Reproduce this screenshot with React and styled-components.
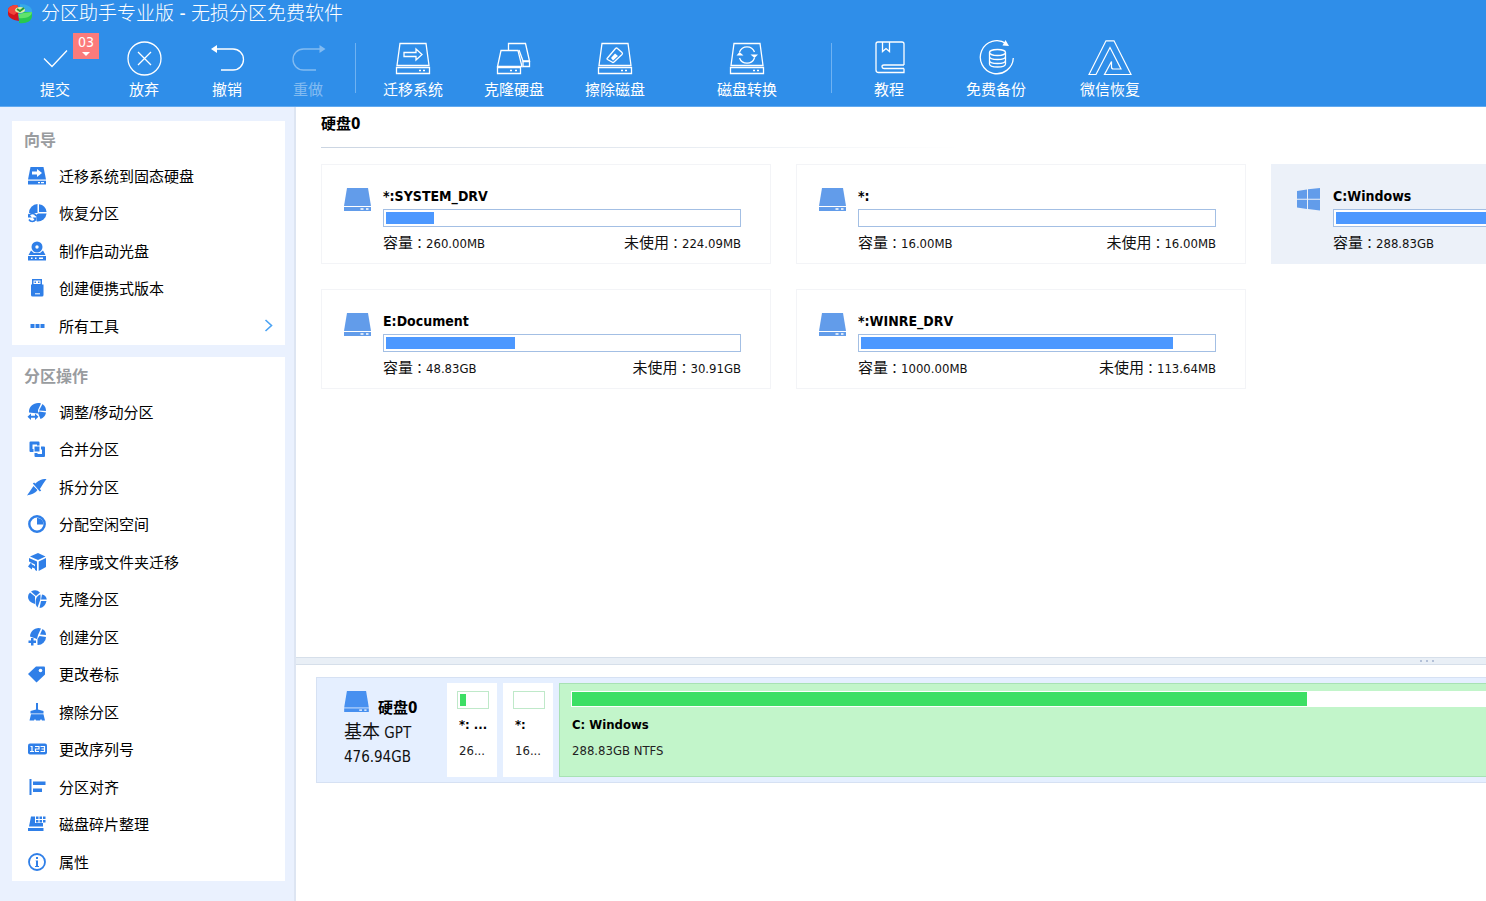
import React from "react";
import styled, { createGlobalStyle } from "styled-components";

const GlobalStyle = createGlobalStyle`
  * {
    box-sizing: border-box;
  }

  body {
    margin: 0;
    background: #fff;
    color: #111;
    font-family: "DejaVu Sans Condensed", "Noto Sans CJK SC", sans-serif;
    font-size: 15px;
  }

  button {
    margin: 0;
    padding: 0;
    border: 0;
    background: none;
    color: inherit;
    font: inherit;
    cursor: pointer;
  }

  svg {
    display: block;
    flex: none;
  }
`;

const Page = styled.div`
  display: flex;
  flex-direction: column;
  min-height: 100vh;
  overflow: hidden;
`;

const Header = styled.header`
  background: #2f8ee9;
  border-bottom: 1px solid #62aaf0;
  color: #fff;
`;

const TitleBar = styled.div`
  display: flex;
  align-items: center;
  gap: 8px;
  height: 26px;
  padding-left: 7px;
`;

const Title = styled.h1`
  margin: 0;
  font-size: 19px;
  font-weight: 300;
  line-height: 24px;
  white-space: nowrap;
`;

const Toolbar = styled.nav`
  display: flex;
  align-items: flex-start;
  height: 80px;
  padding: 14px 0 0 12px;
`;

const ToolButton = styled.button`
  position: relative;
  display: flex;
  flex: none;
  flex-direction: column;
  align-items: center;
  gap: 4px;
  width: ${(props) => props.$width}px;
  line-height: 20px;
  opacity: ${(props) => (props.disabled ? 0.4 : 1)};
`;

const Separator = styled.span`
  flex: none;
  width: 1px;
  height: 50px;
  margin: 3px ${(props) => props.$gap}px 0;
  background: #6fb2f2;
`;

const Badge = styled.span`
  position: absolute;
  top: -7px;
  right: -1px;
  display: flex;
  flex-direction: column;
  align-items: center;
  width: 26px;
  height: 26px;
  background: #fb7b7b;
  font-size: 14px;
  line-height: 19px;
`;

const Body = styled.div`
  display: flex;
  flex: 1;
`;

const Sidebar = styled.aside`
  display: flex;
  flex: none;
  flex-direction: column;
  gap: 12px;
  width: 296px;
  padding: 14px 9px 20px 12px;
  border-right: 2px solid #dde5f2;
  background: #eaf1fe;
`;

const Panel = styled.section`
  padding-bottom: 1px;
  background: #fff;
`;

const PanelTitle = styled.h2`
  margin: 0;
  padding: 3px 0 0 12px;
  color: #999c9f;
  font-size: 16px;
  line-height: 33px;
`;

const MenuList = styled.ul`
  display: grid;
  grid-auto-rows: 37px 38px;
  margin: 0;
  padding: 0;
  list-style: none;
`;

const MenuButton = styled.button`
  display: flex;
  align-items: center;
  gap: 12px;
  width: 100%;
  height: 100%;
  padding: 0 12px 0 15px;
  color: #000;
  text-align: left;

  > svg:first-child {
    color: #2f7fe8;
  }
`;

const MenuLabel = styled.span`
  flex: 1;
  padding-bottom: 1px;
`;

const Main = styled.main`
  display: flex;
  flex: 1;
  flex-direction: column;
  min-width: 0;
`;

const DiskView = styled.section`
  flex: 1;
  padding: 7px 0 0 25px;
  overflow: hidden;
`;

const DiskTitle = styled.h2`
  margin: 0;
  color: #000;
  font-size: 15px;
  line-height: 20px;
`;

const Divider = styled.hr`
  width: 640px;
  height: 1px;
  margin: 13px 0 16px;
  border: 0;
  background: linear-gradient(to right, #cbd5e2, #fff);
`;

const CardGrid = styled.div`
  display: grid;
  grid-template-columns: repeat(3, 450px);
  gap: 25px;
`;

const Card = styled.article`
  display: flex;
  gap: 12px;
  padding: 21px 29px 9px 22px;
  border: 1px solid ${(props) => (props.$selected ? "#ecf1f9" : "#f3f4f7")};
  background: ${(props) => (props.$selected ? "#ecf1f9" : "#fff")};

  > svg {
    margin-top: 2px;
    color: #629cea;
  }
`;

const CardBody = styled.div`
  flex: 1;
`;

const CardName = styled.h3`
  margin: 0 0 3px;
  color: #000;
  font-size: 14px;
  line-height: 20px;
`;

const UsageBar = styled.div`
  height: 18px;
  padding: 2px;
  border: 1px solid #a3bfe4;
  background: #fff;
`;

const UsageFill = styled.div`
  height: 100%;
  background: #4c98ff;
`;

const CardMeta = styled.div`
  display: flex;
  justify-content: space-between;
  margin-top: 6px;
  font-size: 13px;
  line-height: 20px;
`;

const MetaText = styled.span`
  display: flex;
  align-items: baseline;
`;

const MetaLabel = styled.span`
  font-size: 15px;
`;

const Colon = styled.span`
  font-family: "Noto Sans CJK TC", sans-serif;
`;

const Splitter = styled.div`
  display: flex;
  align-items: center;
  justify-content: flex-end;
  gap: 4px;
  height: 8px;
  padding-right: 52px;
  border: solid #d6dfea;
  border-width: 1px 0;
  background: #e9eff6;
`;

const Grip = styled.i`
  width: 2px;
  height: 2px;
  background: #b4c1d8;
`;

const MapView = styled.section`
  padding: 12px 0 118px 20px;
`;

const DiskMap = styled.div`
  display: flex;
  gap: 6px;
  padding: 5px 0;
  border: 1px solid #d6e1f3;
  border-right: 0;
  background: #e5efff;
`;

const DiskInfo = styled.div`
  flex: none;
  width: 124px;
  padding: 8px 0 0 27px;
  font-size: 15px;
  line-height: 24px;
`;

const DiskInfoHead = styled.div`
  display: flex;
  gap: 9px;
  color: #000;
  font-weight: bold;

  > svg {
    color: #4790f0;
  }

  > span {
    padding-top: 5px;
  }
`;

const DiskKind = styled.span`
  font-size: 18px;
`;

const Part = styled.div`
  flex: ${(props) => (props.$active ? "1" : "none")};
  width: 50px;
  min-width: 0;
  height: 94px;
  padding: ${(props) => (props.$active ? "7px 0 0 11px" : "7px 7px 0 9px")};
  border: 1px solid ${(props) => (props.$active ? "#a8e2b4" : "#fff")};
  border-right-width: ${(props) => (props.$active ? "0" : "1px")};
  background: ${(props) => (props.$active ? "#c2f5ca" : "#fff")};
  font-size: 13px;
  white-space: nowrap;
`;

const PartBar = styled.div`
  height: ${(props) => (props.$active ? "16px" : "18px")};
  padding: ${(props) => (props.$active ? "1px 0 1px 1px" : "2px")};
  border: ${(props) => (props.$active ? "0" : "1px solid #bfe9c9")};
  background: #fff;
`;

const PartFill = styled.div`
  height: 100%;
  background: #3cdf64;
`;

const PartName = styled.div`
  margin-top: ${(props) => (props.$active ? "8px" : "6px")};
  padding-left: ${(props) => (props.$active ? "1px" : "2px")};
  color: #000;
  font-weight: bold;
  line-height: 20px;
`;

const PartSize = styled.div`
  margin-top: 6px;
  padding-left: ${(props) => (props.$active ? "1px" : "2px")};
  color: #222;
  line-height: 20px;
`;

const Logo = () => (
  <svg width="26" height="22" viewBox="0 0 26 22">
    <path d="M13 8V2C20 2 25 5 25 9v3H17Z" fill="#35a9e8" />
    <path d="M17 10h8v4c0 5-6 8-13 7l1-8Z" fill="#27c94f" />
    <path d="M11 12l6-1 8-1c0 4-6 7-13 6Z" fill="#5fe36c" />
    <path d="M1 8c0-3 4-5 9-5l3 5-2 4 1 7C5 18 1 15 1 12Z" fill="#d3141d" />
    <path d="M1 8c0-3 4-5 9-5l3 5-6 5C3 12 1 10 1 8Z" fill="#f0463c" />
    <ellipse cx="13" cy="8" rx="5" ry="3" fill="#d9f2a7" />
    <path d="M10 7l3 2 4-3" fill="none" stroke="#299b32" strokeWidth="2" />
  </svg>
);

const LineIcon = ({ children }) => (
  <svg
    width="36"
    height="36"
    viewBox="0 0 36 36"
    fill="none"
    stroke="currentColor"
    strokeWidth="1.3"
    aria-hidden="true"
  >
    {children}
  </svg>
);

const driveOutline = (
  <>
    <path d="M5 3.5h26l3 22H2Z" />
    <path d="M1.5 27.5h33v6h-33Z" />
    <path d="M24 30.5h2M28 30.5h2" />
  </>
);

const toolIcons = {
  submit: (
    <LineIcon>
      <path d="M7 18.500l8 8 15-16" />
    </LineIcon>
  ),
  discard: (
    <LineIcon>
      <circle cx="18.500" cy="18.500" r="16.500" />
      <path d="M12 12l13 13M25 12L12 25" />
    </LineIcon>
  ),
  undo: (
    <LineIcon>
      <path d="M6 9h18a10.500 10.500 0 0 1 0 21H12" />
      <path d="M2 9l6-4v8Z" fill="currentColor" stroke="none" />
    </LineIcon>
  ),
  redo: (
    <LineIcon>
      <path d="M31 9H13.500a10.500 10.500 0 0 0 0 21H26" />
      <path d="M35.500 9l-6-4v8Z" fill="currentColor" stroke="none" />
    </LineIcon>
  ),
  migrate: (
    <LineIcon>
      {driveOutline}
      <path d="M9 12.500h12v-3.500l6 5.500-6 5.500v-3.500H9Z" />
    </LineIcon>
  ),
  clone: (
    <LineIcon>
      <path d="M5 10.500h17l4 16H1.500Z" />
      <path d="M1.500 27.500h23v6h-23Z" />
      <path d="M14 30.500h2M19 30.500h2" />
      <path d="M12.500 10V3.500h17l4 17.500h-6.500l-4-11" />
      <path d="M27 21.500h6.500v5H27Z" />
    </LineIcon>
  ),
  erase: (
    <LineIcon>
      {driveOutline}
      <path d="M10.500 18l8-9.500q1-1 2 0l4.500 4q1 1 0 2l-8 7.500q-1 1-2 0l-4.500-2.500q-1-.7 0-1.500Z" />
      <path d="M14 18l4-4.500 3 2.500-5 4.500Z" fill="currentColor" stroke="none" />
    </LineIcon>
  ),
  convert: (
    <LineIcon>
      {driveOutline}
      <path d="M10.500 12a8 8 0 0 1 15 0M25.500 18a8 8 0 0 1-15 0" />
      <path d="M7.500 15.500L10.500 12l4 3.500ZM21.500 14.500h7.500L25.500 18Z" fill="currentColor" stroke="none" />
    </LineIcon>
  ),
  tutorial: (
    <LineIcon>
      <path d="M33 25V4q0-2-2-2H7Q5 2 5 4v26q0 2.500 2.500 2.500H33v-4M33 25H13q-2 0-2 1.700t2 1.800h20" />
      <path d="M11.500 2v9.500l3.500-3 3.500 3V2" />
    </LineIcon>
  ),
  backup: (
    <LineIcon>
      <path d="M28 3.500A16.500 16.500 0 1 0 35.300 18" />
      <path d="M24.500 5.500L27.500 0 31 6Z" fill="currentColor" stroke="none" />
      <ellipse cx="19.500" cy="12.500" rx="8" ry="3" />
      <path d="M11.500 12.500V24c0 4 16 4 16 0V12.500M11.500 16.500c0 4 16 4 16 0M11.500 20.500c0 4 16 4 16 0" />
    </LineIcon>
  ),
  wechat: (
    <svg width="44" height="36" viewBox="0 0 44 36" fill="none" stroke="currentColor" strokeWidth="1.200">
      <path d="M1 34.500L18 .800h8L43 34.500H16.500l7-13V27q0 2 2 2h7.500L22 7.500 8 34.500Z" />
    </svg>
  ),
};

const MenuIcon = ({ children }) => (
  <svg width="20" height="20" viewBox="0 0 20 20" fill="currentColor" aria-hidden="true">
    {children}
  </svg>
);

const menuIcons = {
  migrate: (
    <MenuIcon>
      <path d="M3.500 1h13L19 13.500H1Z" />
      <path d="M1 14.700h18V18.500H1Z" />
      <path d="M5 5.500h5V3l5 4-5 4V8.500H5Z" fill="#fff" />
      <path d="M11 16h2v1.200h-2ZM14 16h3v1.200h-3Z" fill="#fff" />
    </MenuIcon>
  ),
  restore: (
    <MenuIcon>
      <path d="M10.500 1v9H2a9 9 0 0 1 8.500-9Z" />
      <path d="M12 1.200A9 9 0 0 1 19.600 9H12Z" />
      <path d="M19.600 10.500A9 9 0 0 1 10 18.500L9 12l2-1.500Z" />
      <path d="M2 13a3.700 3.700 0 0 1 7 0M8.500 16.500a3.700 3.700 0 0 1-6.500 0" fill="none" stroke="currentColor" strokeWidth="1.600" />
      <path d="M1 10.500v4h4ZM9.500 18.500v-4h-4Z" />
    </MenuIcon>
  ),
  disc: (
    <MenuIcon>
      <path d="M4 9.500L1.500 14h17l-2.500-4.500-3 2.500H7Z" />
      <circle cx="10" cy="6" r="5.500" />
      <circle cx="10" cy="6" r="1.700" fill="#fff" />
      <path d="M1 15h18v4.500H1Z" />
      <path d="M4 16.500h1.500V18H4ZM8 16.500h1.500V18H8ZM12 16.500h4V18h-4Z" fill="#fff" />
    </MenuIcon>
  ),
  usb: (
    <MenuIcon>
      <path d="M5 1h10v6H5Z" />
      <path d="M6.500 2.500h7V6h-7Z" fill="#fff" />
      <path d="M7.500 3.500H9V5H7.500ZM11 3.500h1.500V5H11Z" />
      <path d="M4 6.500h12.500V17q0 1.500-1.500 1.500H5.500Q4 18.500 4 17Z" />
      <path d="M8 15.300h5v1H8Z" fill="#fff" />
    </MenuIcon>
  ),
  more: (
    <MenuIcon>
      <path d="M3.500 8h4v4h-4ZM8.500 8h4v4h-4ZM13.500 8h4v4h-4Z" />
    </MenuIcon>
  ),
  resize: (
    <MenuIcon>
      <path d="M2 10.500C1.500 4 8 -.500 14 1.500L11 8v3.500Z" />
      <path d="M15.500 2a8.500 8.500 0 0 1 3.500 7l-7-.5Z" />
      <path d="M12 9.500l7 1A8.500 8.500 0 0 1 13.500 17L11 11Z" />
      <path d="M.500 14.800L4 11.500v2.300h4v-2.300l3.500 3.300L8 18v-2.300H4V18Z" />
    </MenuIcon>
  ),
  merge: (
    <MenuIcon>
      <path d="M3.500 2.500h8q1 0 1 1V6.500H10V5.500H5.500V10H6.500v3H3.500q-1 0-1-1V3.500q0-1 1-1Z" />
      <path d="M17 7.500q1 0 1 1v8.500q0 1-1 1H8.500q-1 0-1-1V14H10.500v1H15v-4.500H14V7.500Z" />
      <path d="M7.500 7.500H12.500v5H7.500Z" />
    </MenuIcon>
  ),
  split: (
    <MenuIcon>
      <path d="M19.500 2C14 2 10.500 4 7.500 7.500l5 5C15 8.500 17 5.500 19.500 2Z" />
      <path d="M0 18.500L6.500 9l4 4C8 16.500 4 17.500 0 18.500Z" />
      <path d="M5.500 6.500l8 8" stroke="#fff" strokeWidth="1.200" />
      <path d="M6.500 6l7 8" stroke="currentColor" strokeWidth="1.800" />
    </MenuIcon>
  ),
  allocate: (
    <MenuIcon>
      <circle cx="10" cy="10" r="7.700" fill="none" stroke="currentColor" strokeWidth="2.400" />
      <path d="M10 4a6 6 0 0 1 6.500 6.500H10Z" />
    </MenuIcon>
  ),
  folder: (
    <MenuIcon>
      <path d="M3 4.500L11 1l7.500 3.500L11 8Z" />
      <path d="M11.700 9.500L19 6v9l-7.300 4Z" />
      <path d="M2 6l8 3.500V19l-2-1V12.500L2 9.500Z" />
      <path d="M1 14.500l3-4 1 2q4 1 4 5.500-1.500-2.500-4-2.500v2Z" />
    </MenuIcon>
  ),
  clone: (
    <MenuIcon>
      <path d="M1 8q0-3 2-4.500l5 4V15Q1 13 1 8Z" />
      <path d="M4 2.500Q9 -.500 13 3.500L9 7Z" />
      <path d="M10.500 18.500Q7.500 15 9 10q1.500-4 4.500-4.500V10Z" />
      <path d="M15 5.500q4 .5 4.800 5H14Z" />
      <path d="M14 12h5.500q-1.500 6.500-7 7Z" />
    </MenuIcon>
  ),
  create: (
    <MenuIcon>
      <path d="M3 9.500A8.500 8.500 0 0 1 14 1.500L11 8l-1 4Z" />
      <path d="M15.500 2q3.500 2 3.500 6l-6-.5Z" />
      <path d="M12.500 9l6.500 1a8 8 0 0 1-8.500 8V12Z" />
      <path d="M4 11h2.500v2.500H9V16H6.500v2.500H4V16H1.500v-2.500H4Z" />
    </MenuIcon>
  ),
  label: (
    <MenuIcon>
      <path d="M1 10l8-7.500h8q1 0 1 1v7L9.500 18.500Z" />
      <circle cx="13.500" cy="6.500" r="1.800" fill="#fff" />
    </MenuIcon>
  ),
  wipe: (
    <MenuIcon>
      <path d="M9 1h2v6.500l5.500 1.500v2.500h-13V9L9 7.500Z" />
      <path d="M4 12.300h12.500l1.500 6.200h-3l-1-1.500-1 1.500H9l-1-1.500-1 1.500H2.500Z" />
    </MenuIcon>
  ),
  serial: (
    <MenuIcon>
      <rect x="1" y="4.500" width="19" height="11" rx="2" />
      <path d="M3.500 7.500H5v5M3 12.500h4M8 7.500h4V10H8.500v2.500H12M13.500 7.500h4v5h-4M14.500 10h3" fill="none" stroke="#fff" strokeWidth="1.200" />
    </MenuIcon>
  ),
  align: (
    <MenuIcon>
      <path d="M2.500 2h2v16h-2ZM6 4.500h12.500V8H6ZM6 11.500h9V15H6Z" />
    </MenuIcon>
  ),
  defrag: (
    <MenuIcon>
      <path d="M4 2.500h4V9h8v3.500H2Z" />
      <path d="M1 14h15.500v3H1Z" />
      <path d="M9 2.500h2.500V5H9ZM12.500 2.500H15V5h-2.500ZM16 2.500h2.500V5H16ZM9 6h2.500v2.500H9ZM12.500 6H15v2.500h-2.500ZM16 6h2.500v2.500H16Z" />
    </MenuIcon>
  ),
  info: (
    <MenuIcon>
      <circle cx="10" cy="10" r="8" fill="none" stroke="currentColor" strokeWidth="1.800" />
      <path d="M9 5h2v2H9ZM8.500 8.500H11V14h1v1H8v-1h1V9.500Z" />
    </MenuIcon>
  ),
};

const Chevron = () => (
  <svg width="9" height="14" viewBox="0 0 9 14" fill="none" stroke="#4ba3f4" strokeWidth="1.600">
    <path d="M1.500 1L7.500 6.500l-6 5.500" />
  </svg>
);

const DriveIcon = ({ width = 27, height = 23 }) => (
  <svg width={width} height={height} viewBox="0 0 27 23" fill="currentColor" aria-hidden="true">
    <path d="M3 0h21L27 18H0Z" />
    <path d="M0 19h27v4H0Z" />
    <path d="M16.500 20.300h3v1.400h-3ZM22 20.300h2.500v1.400H22Z" fill="#fff" />
  </svg>
);

const WindowsIcon = () => (
  <svg width="27" height="23" viewBox="0 0 27 23" fill="currentColor" aria-hidden="true">
    <path d="M3 3l10-1.500v9.300H3ZM14 1.300L26 0v10.800H14ZM3 11.800h10V21L3 19.500ZM14 11.800h12V22.500L14 21Z" />
  </svg>
);

const tools = [
  { id: "submit", label: "提交", width: 86, badge: "03" },
  { id: "discard", label: "放弃", width: 92 },
  { id: "undo", label: "撤销", width: 74 },
  { id: "redo", label: "重做", width: 88, disabled: true },
  { id: "sep-1", gap: 3 },
  { id: "migrate", label: "迁移系统", width: 108 },
  { id: "clone", label: "克隆硬盘", width: 94 },
  { id: "erase", label: "擦除磁盘", width: 108 },
  { id: "convert", label: "磁盘转换", width: 156 },
  { id: "sep-2", gap: 6 },
  { id: "tutorial", label: "教程", width: 102 },
  { id: "backup", label: "免费备份", width: 112 },
  { id: "wechat", label: "微信恢复", width: 116 },
];

const wizardItems = [
  { icon: "migrate", label: "迁移系统到固态硬盘" },
  { icon: "restore", label: "恢复分区" },
  { icon: "disc", label: "制作启动光盘" },
  { icon: "usb", label: "创建便携式版本" },
  { icon: "more", label: "所有工具", more: true },
];

const operationItems = [
  { icon: "resize", label: "调整/移动分区" },
  { icon: "merge", label: "合并分区" },
  { icon: "split", label: "拆分分区" },
  { icon: "allocate", label: "分配空闲空间" },
  { icon: "folder", label: "程序或文件夹迁移" },
  { icon: "clone", label: "克隆分区" },
  { icon: "create", label: "创建分区" },
  { icon: "label", label: "更改卷标" },
  { icon: "wipe", label: "擦除分区" },
  { icon: "serial", label: "更改序列号" },
  { icon: "align", label: "分区对齐" },
  { icon: "defrag", label: "磁盘碎片整理" },
  { icon: "info", label: "属性" },
];

const partitions = [
  { name: "*:SYSTEM_DRV", size: "260.00MB", free: "224.09MB", used: 13.6 },
  { name: "*:", size: "16.00MB", free: "16.00MB", used: 0 },
  { name: "C:Windows", size: "288.83GB", used: 80, windows: true },
  { name: "E:Document", size: "48.83GB", free: "30.91GB", used: 36.6 },
  { name: "*:WINRE_DRV", size: "1000.00MB", free: "113.64MB", used: 88.5 },
];

const mapParts = [
  { name: "*: ...", size: "26...", used: 22 },
  { name: "*:", size: "16...", used: 0 },
  { name: "C: Windows", size: "288.83GB NTFS", used: 80.4, active: true },
];

const Menu = ({ title, items }) => (
  <Panel>
    <PanelTitle>{title}</PanelTitle>
    <MenuList>
      {items.map((item) => (
        <li key={item.label}>
          <MenuButton type="button">
            {menuIcons[item.icon]}
            <MenuLabel>{item.label}</MenuLabel>
            {item.more && <Chevron />}
          </MenuButton>
        </li>
      ))}
    </MenuList>
  </Panel>
);

const Meta = ({ label, value }) => (
  <MetaText>
    <MetaLabel>{label}</MetaLabel>
    <Colon>：</Colon>
    {value}
  </MetaText>
);

const PartitionCard = ({ part }) => (
  <Card $selected={part.windows}>
    {part.windows ? <WindowsIcon /> : <DriveIcon />}
    <CardBody>
      <CardName>{part.name}</CardName>
      <UsageBar>
        <UsageFill style={{ width: `${part.used}%` }} />
      </UsageBar>
      <CardMeta>
        <Meta label="容量" value={part.size} />
        {part.free && <Meta label="未使用" value={part.free} />}
      </CardMeta>
    </CardBody>
  </Card>
);

const App = () => {
  return (
    <Page>
      <GlobalStyle />
      <Header>
        <TitleBar>
          <Logo />
          <Title>分区助手专业版 - 无损分区免费软件</Title>
        </TitleBar>
        <Toolbar>
          {tools.map((tool) =>
            tool.label ? (
              <ToolButton key={tool.id} type="button" $width={tool.width} disabled={tool.disabled}>
                {toolIcons[tool.id]}
                {tool.label}
                {tool.badge && (
                  <Badge>
                    {tool.badge}
                    <svg width="8" height="4" viewBox="0 0 8 4">
                      <path d="M0 0h8L4 4Z" fill="#fff" />
                    </svg>
                  </Badge>
                )}
              </ToolButton>
            ) : (
              <Separator key={tool.id} $gap={tool.gap} />
            )
          )}
        </Toolbar>
      </Header>

      <Body>
        <Sidebar>
          <Menu title="向导" items={wizardItems} />
          <Menu title="分区操作" items={operationItems} />
        </Sidebar>

        <Main>
          <DiskView>
            <DiskTitle>硬盘0</DiskTitle>
            <Divider />
            <CardGrid>
              {partitions.map((part) => (
                <PartitionCard key={part.name} part={part} />
              ))}
            </CardGrid>
          </DiskView>

          <Splitter>
            <Grip />
            <Grip />
            <Grip />
          </Splitter>

          <MapView>
            <DiskMap>
              <DiskInfo>
                <DiskInfoHead>
                  <DriveIcon width={25} height={21} />
                  <span>硬盘0</span>
                </DiskInfoHead>
                <div>
                  <DiskKind>基本</DiskKind> GPT
                </div>
                <div>476.94GB</div>
              </DiskInfo>
              {mapParts.map((part) => (
                <Part key={part.name} $active={part.active}>
                  <PartBar $active={part.active}>
                    <PartFill style={{ width: `${part.used}%` }} />
                  </PartBar>
                  <PartName $active={part.active}>{part.name}</PartName>
                  <PartSize $active={part.active}>{part.size}</PartSize>
                </Part>
              ))}
            </DiskMap>
          </MapView>
        </Main>
      </Body>
    </Page>
  );
};

export default App;
